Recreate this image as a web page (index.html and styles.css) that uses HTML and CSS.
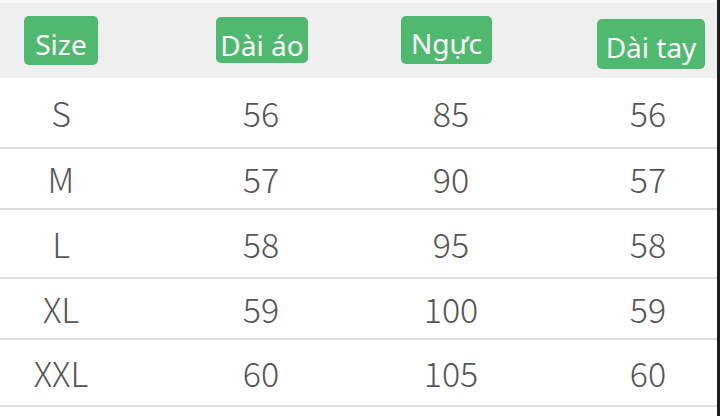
FILE: index.html
```html
<!DOCTYPE html>
<html lang="vi">
<head>
<meta charset="utf-8">
<title>Bảng size</title>
<link rel="stylesheet" href="styles.css">
</head>
<body>
<div class="page">
  <div class="sheet">
    <div class="head">
      <div class="cell c1"><span class="badge b1">Size</span></div>
      <div class="cell c2"><span class="badge b2">Dài áo</span></div>
      <div class="cell c3"><span class="badge b3">Ngực</span></div>
      <div class="cell c4"><span class="badge b4">Dài tay</span></div>
    </div>
    <div class="row r1">
      <div class="cell c1">S</div><div class="cell c2">56</div><div class="cell c3">85</div><div class="cell c4">56</div>
    </div>
    <div class="row r2">
      <div class="cell c1">M</div><div class="cell c2">57</div><div class="cell c3">90</div><div class="cell c4">57</div>
    </div>
    <div class="row r3">
      <div class="cell c1">L</div><div class="cell c2">58</div><div class="cell c3">95</div><div class="cell c4">58</div>
    </div>
    <div class="row r4">
      <div class="cell c1">XL</div><div class="cell c2">59</div><div class="cell c3">100</div><div class="cell c4">59</div>
    </div>
    <div class="row r5">
      <div class="cell c1">XXL</div><div class="cell c2">60</div><div class="cell c3">105</div><div class="cell c4">60</div>
    </div>
  </div>
  <div class="edge"></div>
</div>
</body>
</html>
```

FILE: styles.css
```css
html, body {
  margin: 0;
  padding: 0;
  background: #ffffff;
}
body {
  width: 720px;
  height: 416px;
  overflow: hidden;
}
.page {
  display: flex;
  height: 416px;
}
.sheet {
  flex: 1;
  display: flex;
  flex-direction: column;
}
.edge {
  width: 3px;
  background: #1e1e1e;
}
.head, .row {
  display: grid;
  grid-template-columns: repeat(4, 120px);
  column-gap: 76px;
  padding-left: 1px;
}
.head {
  height: 75px;
  border-top: 3px solid #f8f8f8;
  background: #efefef;
  align-items: start;
}
.row {
  height: 64px;
  border-bottom: 2px solid #dedede;
  align-items: center;
  font-family: "Noto Sans CJK SC", "Noto Sans", sans-serif;
  font-weight: 300;
  font-size: 34px;
  color: #565656;
}
.cell {
  text-align: center;
  line-height: 40px;
}
.row .c2 { padding-left: 8px; }
.row .c3 { padding-right: 4px; }
.row .c4 { padding-right: 2px; }
.head .c2 { padding-left: 10px; }
.head .c3 { padding-right: 13px; }
.head .c4 { padding-left: 4px; }
.head .cell { line-height: normal; }
.badge {
  display: inline-block;
  margin-top: 13px;
  padding: 13px 0 6px;
  height: 30px;
  line-height: 30px;
  background: #4fba6f;
  color: #ffffff;
  border-radius: 5px;
  font-family: "Noto Sans", sans-serif;
  font-weight: 400;
  font-size: 28px;
  text-align: center;
  white-space: nowrap;
}
.b1 { width: 74px; }
.b2 { width: 92px; margin-top: 14px; height: 27px; }
.b3 { width: 91px; padding-top: 12px; }
.b4 { width: 108px; margin-top: 16px; padding-bottom: 7px; }
.r1 { height: 69px; }
.r2 { height: 59px; }
.r3 { height: 67px; }
.r4 { height: 59px; }
.r5 { height: 65px; }
```
